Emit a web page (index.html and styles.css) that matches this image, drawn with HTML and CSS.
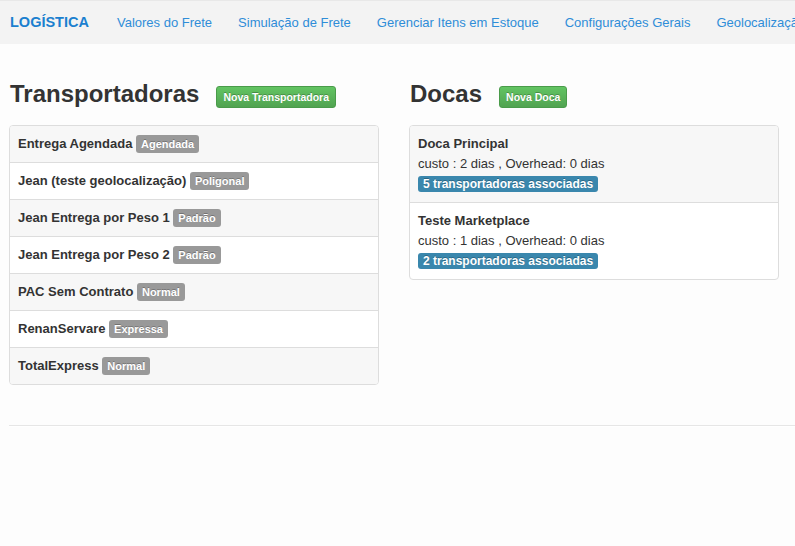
FILE: index.html
```html
<!DOCTYPE html>
<html lang="pt-BR">
<head>
<meta charset="utf-8">
<title>Logística</title>
<link rel="stylesheet" href="styles.css">
</head>
<body>
<nav class="navbar">
  <a class="brand" href="#">LOGÍSTICA</a>
  <ul class="nav">
    <li><a href="#">Valores do Frete</a></li>
    <li><a href="#">Simulação de Frete</a></li>
    <li><a href="#">Gerenciar Itens em Estoque</a></li>
    <li><a href="#">Configurações Gerais</a></li>
    <li><a href="#">Geolocalização</a></li>
  </ul>
</nav>
<main class="content">
  <div class="columns">
    <section class="col">
      <div class="col-head">
        <h2>Transportadoras</h2>
        <a class="btn" href="#">Nova Transportadora</a>
      </div>
      <ul class="list">
        <li class="row striped">Entrega Agendada <span class="label">Agendada</span></li>
        <li class="row">Jean (teste geolocalização) <span class="label">Poligonal</span></li>
        <li class="row striped">Jean Entrega por Peso 1 <span class="label">Padrão</span></li>
        <li class="row">Jean Entrega por Peso 2 <span class="label">Padrão</span></li>
        <li class="row striped">PAC Sem Contrato <span class="label">Normal</span></li>
        <li class="row">RenanServare <span class="label">Expressa</span></li>
        <li class="row striped">TotalExpress <span class="label">Normal</span></li>
      </ul>
    </section>
    <section class="col">
      <div class="col-head">
        <h2>Docas</h2>
        <a class="btn" href="#">Nova Doca</a>
      </div>
      <ul class="list">
        <li class="dock striped">
          <div class="dock-title">Doca Principal</div>
          <div class="dock-info">custo : 2 dias , Overhead: 0 dias</div>
          <div class="dock-info"><span class="label label-info">5 transportadoras associadas</span></div>
        </li>
        <li class="dock">
          <div class="dock-title">Teste Marketplace</div>
          <div class="dock-info">custo : 1 dias , Overhead: 0 dias</div>
          <div class="dock-info"><span class="label label-info">2 transportadoras associadas</span></div>
        </li>
      </ul>
    </section>
  </div>
  <hr class="divider">
</main>
</body>
</html>
```
FILE: styles.css
```css
* { box-sizing: border-box; }
html, body { margin: 0; padding: 0; }
body {
  background: #fdfdfd;
  font-family: "Liberation Sans", Arial, sans-serif;
  font-size: 13px;
  color: #333;
  overflow: hidden;
}
.navbar {
  display: flex;
  align-items: center;
  height: 44px;
  background: #f3f3f3;
  border-top: 1px solid #e8e8e8;
  white-space: nowrap;
  overflow: hidden;
}
.brand {
  padding-left: 10px;
  padding-right: 15px;
  font-size: 14.5px;
  font-weight: bold;
  color: #1b80cf;
  text-decoration: none;
  line-height: 43px;
}
.nav {
  display: flex;
  list-style: none;
  margin: 0;
  padding: 0;
}
.nav a {
  display: block;
  padding: 0 13px;
  line-height: 43px;
  color: #2f8dd8;
  text-decoration: none;
  font-size: 13px;
}
.content {
  padding-top: 37px;
}
.columns {
  display: flex;
  gap: 30px;
  padding-left: 9px;
}
.col {
  width: 370px;
}
.col-head {
  display: flex;
  align-items: center;
  height: 26px;
  margin-bottom: 18px;
}
.col-head h2 {
  margin: 0;
  font-size: 24px;
  line-height: 26px;
  font-weight: bold;
  color: #333;
  padding-left: 1px;
}
.btn {
  margin-left: 17px;
  margin-top: 5px;
  display: inline-block;
  padding: 2px 6px;
  font-size: 10.5px;
  line-height: 16px;
  font-weight: bold;
  color: #fff;
  text-decoration: none;
  text-shadow: 0 -1px 0 rgba(0,0,0,0.25);
  background: linear-gradient(#62c462, #51a351);
  border: 1px solid #4a9b4a;
  border-radius: 3px;
}
.list {
  list-style: none;
  margin: 0;
  padding: 0;
  border: 1px solid #ddd;
  border-radius: 4px;
  overflow: hidden;
  background: #fff;
}
.row {
  padding: 8px 8px;
  line-height: 20px;
  font-weight: bold;
  border-top: 1px solid #ddd;
}
.row:first-child, .dock:first-child { border-top: 0; }
.striped { background: #f7f7f7; }
.label {
  display: inline-block;
  padding: 2px 5px;
  font-size: 11px;
  line-height: 14px;
  font-weight: bold;
  color: #fff;
  background: #999;
  border-radius: 3px;
  text-shadow: 0 -1px 0 rgba(0,0,0,0.25);
  vertical-align: baseline;
}
.label-info {
  background: #3a87ad;
  font-size: 12px;
  line-height: 14px;
  padding: 1px 5px;
}
.dock {
  padding: 8px 8px;
  line-height: 20px;
  border-top: 1px solid #ddd;
}
.dock-title { font-weight: bold; }
.divider {
  margin: 40px 0 0 9px;
  border: 0;
  border-top: 1px solid #e6e6e6;
  border-bottom: 1px solid #fff;
}
```
